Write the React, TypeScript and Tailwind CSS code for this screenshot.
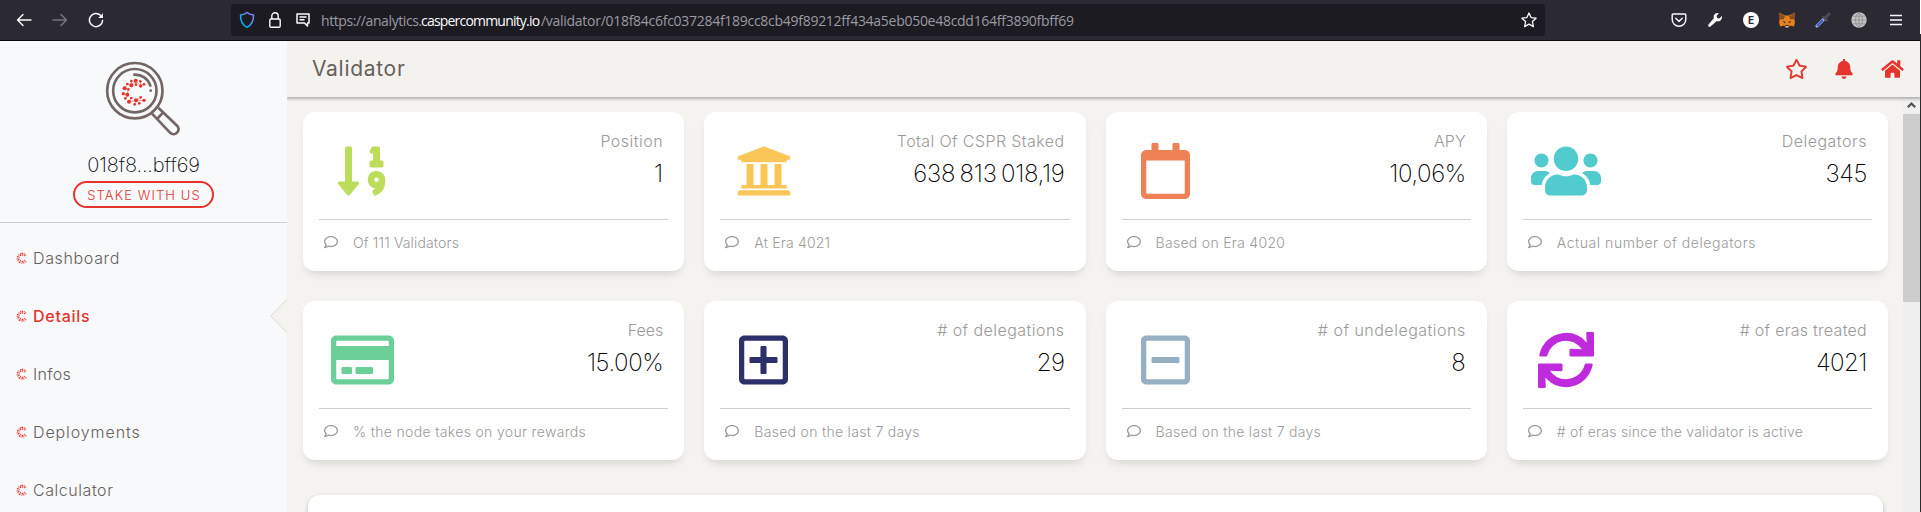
import type { ReactNode } from "react";
import type { IconType } from "react-icons";
import {
  FaBell,
  FaHome,
  FaRegCalendar,
  FaRegComment,
  FaRegCreditCard,
  FaRegMinusSquare,
  FaRegPlusSquare,
  FaRegStar,
  FaSortNumericDown,
  FaSync,
  FaUniversity,
  FaUsers,
} from "react-icons/fa";

const RING_DOTS: [number, number, number][] = [
  [382, 252, 4], [394, 243, 4], [407, 242, 6], [421, 244, 4], [432, 253, 4], [422, 258, 5],
  [408, 254, 4], [394, 256, 6], [374, 265, 6], [385, 268, 4], [370, 281, 5], [382, 284, 6],
  [376, 295, 4], [387, 305, 6], [394, 294, 4], [408, 301, 6], [404, 313, 4], [418, 310, 4],
  [422, 292, 4], [432, 301, 5],
];

function CasperDots() {
  return (
    <g fill="#e5342b" stroke="none">
      {RING_DOTS.map(([x, y, r]) => (
        <circle key={`${x}-${y}`} cx={x} cy={y} r={r} />
      ))}
      <path
        d="M382 252l12 4 14-14v12M394 243v13M421 244l1 14 10-5M407 242l15 16M374 265l11 3M374 265l8-13M370 281l12 3 3-16M376 295l6-11M387 305l7-11M387 305l21-4 14-9M404 313l4-12 24 0M418 310l-10-9"
        fill="none"
        stroke="#e5342b"
        strokeWidth="1.500"
      />
    </g>
  );
}

function Logo() {
  return (
    <svg viewBox="300 168 261 252" className="h-[84px] w-[87px]" fill="none" stroke="#736764" strokeWidth="8">
      <circle cx="404.500" cy="272" r="83" />
      <circle cx="404.500" cy="272" r="65" />
      <path d="M403 224a48 48 0 0 1 48 33" strokeLinecap="round" />
      <circle cx="452" cy="272" r="4" fill="#736764" stroke="none" />
      <path d="M456 341l54 57a14 14 0 0 0 22-1a15 15 0 0 0 0-19l-57-55" strokeLinejoin="round" />
      <path d="M471 357l18-19" />
      <CasperDots />
    </svg>
  );
}

function MenuMark() {
  return (
    <svg viewBox="362 232 78 86" className="h-3 w-[11px] shrink-0">
      <CasperDots />
    </svg>
  );
}

function BrowserBar() {
  return (
    <div className="flex h-[41px] shrink-0 items-center border-b border-[#0c0c0f] bg-[#2b2a33] text-[#fbfbfe]">
      <div className="flex w-[231px] items-center pl-4">
        <svg viewBox="0 0 16 16" className="size-4" fill="none" stroke="currentColor" strokeWidth="1.400" strokeLinecap="round" strokeLinejoin="round">
          <path d="M15 8H1.500M7 2.500L1.500 8L7 13.500" />
        </svg>
        <svg viewBox="0 0 16 16" className="ml-5 size-4 text-[#77767c]" fill="none" stroke="currentColor" strokeWidth="1.400" strokeLinecap="round" strokeLinejoin="round">
          <path d="M1 8h13.500M9 2.500L14.500 8L9 13.500" />
        </svg>
        <svg viewBox="0 0 16 16" className="ml-5 size-4" fill="none" stroke="currentColor" strokeWidth="1.500" strokeLinecap="round">
          <path d="M12.500 3.200A6.600 6.600 0 1 0 14.600 8.500" />
          <path d="M15 1.200V6H10.200z" fill="currentColor" stroke="none" />
        </svg>
      </div>
      <div className="flex h-8 w-[1314px] items-center rounded bg-[#1c1b22] px-2">
        <svg viewBox="0 0 16 18" className="h-[18px] w-4" fill="none" strokeWidth="1.500" strokeLinejoin="round">
          <defs>
            <linearGradient id="shield" x1="0" y1="1" x2="1" y2="0">
              <stop offset="0.300" stopColor="#00b3f4" />
              <stop offset="1" stopColor="#ab71ff" />
            </linearGradient>
          </defs>
          <path stroke="url(#shield)" d="M8 1.500C6.500 3 4 3.800 1.500 4C1.300 9.500 3 13.700 8 16.300C13 13.700 14.700 9.500 14.500 4C12 3.800 9.500 3 8 1.500z" />
        </svg>
        <svg viewBox="0 0 12 16" className="ml-[14px] h-4 w-3" fill="none" stroke="currentColor" strokeWidth="1.400">
          <rect x=".8" y="7" width="10.400" height="8.200" rx="1.200" />
          <path d="M2.800 7V4a3.200 3.200 0 0 1 6.400 0v3" />
        </svg>
        <svg viewBox="0 0 14 14" className="ml-[15px] size-3.5" fill="none" stroke="currentColor" strokeWidth="1.500" strokeLinejoin="round">
          <path d="M1 1h12v9h-1.500v3l-3-3H1zM3.500 4h7M3.500 6.800h5" />
        </svg>
        <div className="ml-[11px] flex pt-0.5 font-['Open_Sans',sans-serif] text-[14px] leading-5 text-[#9b9aa1]">
          <span className="w-[100px] tracking-[-0.4px]">https://analytics.</span>
          <span className="w-[120px] tracking-[-0.8px] text-[#fbfbfe]">caspercommunity.io</span>
          <span className="tracking-[-0.28px]">
            /validator/018f84c6fc037284f189cc8cb49f89212ff434a5eb050e48cdd164ff3890fbff69
          </span>
        </div>
        <svg viewBox="0 0 16 16" className="ml-auto size-4" fill="none" stroke="currentColor" strokeWidth="1.300" strokeLinejoin="round">
          <path d="M8 1l2.100 4.600 5 .6-3.700 3.400 1 5L8 12.100 3.600 14.600l1-5L.9 6.200l5-.6z" />
        </svg>
      </div>
      <div className="ml-auto flex items-center gap-5 pr-[17px]">
        <svg viewBox="0 0 16 16" className="size-4" fill="none" stroke="currentColor" strokeWidth="1.400" strokeLinecap="round" strokeLinejoin="round">
          <path d="M2.200 2h11.600a1 1 0 0 1 1 1v4.500a6.800 6.800 0 0 1-13.600 0V3a1 1 0 0 1 1-1zM4.800 6.300L8 9.400l3.200-3.100" />
        </svg>
        <svg viewBox="0 0 16 16" className="size-4" fill="currentColor">
          <path d="M14.900 4.100l-2.500 2.300-2.300-.5-.5-2.200L12 1.200a4 4 0 0 0-5.200 5L1.300 12.800a1.400 1.400 0 0 0 1.900 1.900l6.500-5.600a4 4 0 0 0 5.200-5z" />
        </svg>
        <div className="flex size-4 items-center justify-center rounded-full bg-white font-['Inter',sans-serif] text-[10px] font-bold text-[#2b2a33]">
          E
        </div>
        <svg viewBox="0 0 16 16" className="size-4">
          <path d="M0 .6L6 3.500h4L16 .6 15.300 7l.6 3.500-1 4-4-1-1.400 1.700h-3L5.100 13.500l-4 1-1-4L.7 7z" fill="#e8821e" />
          <path d="M0 .6L6 4.500 4.500 7.500.7 7zM16 .6L10 4.500l1.500 3 3.800-.5z" fill="#8a4a22" />
          <path d="M3.500 9l3 .8-.5 1.600zM12.500 9l-3 .8.5 1.600zM6.500 13h3l.4 1.200H6.100z" fill="#3c2a23" />
          <path d="M6.300 14.200h3.400l-.5 1.400H6.800z" fill="#d7c1b3" />
        </svg>
        <svg viewBox="0 0 16 16" className="size-4" strokeLinecap="round">
          <path d="M2 14L9.500 6.500" stroke="#c9d3ee" strokeWidth="3" />
          <path d="M2.400 13.600L7.500 8.500" stroke="#2f55d4" strokeWidth="2" />
          <path d="M8.500 5l3 3M10.500 6l3.500-4" stroke="#4b4b52" strokeWidth="3" />
        </svg>
        <svg viewBox="0 0 16 16" className="size-4">
          <circle cx="8" cy="8" r="7.700" fill="#c4c4c4" />
          <path d="M.5 8h15M8 .5v15M2 4.200h12M2 11.800h12M8 .5C3.300 4 3.300 12 8 15.500C12.700 12 12.700 4 8 .5" fill="none" stroke="#85858a" strokeWidth=".7" />
        </svg>
        <svg viewBox="0 0 14 12" className="ml-[2px] h-3 w-3.5" stroke="currentColor" strokeWidth="1.300">
          <path d="M1 1.500h12M1 6h12M1 10.500h12" />
        </svg>
      </div>
    </div>
  );
}

function MenuItem({ children }: { children: ReactNode }) {
  return (
    <div className="flex h-[58px] items-center gap-1.5 pl-4 text-base font-light text-[#66615b]">
      <MenuMark />
      {children}
    </div>
  );
}

function Sidebar() {
  return (
    <aside className="flex w-[287px] shrink-0 flex-col bg-[#f8f9fb]">
      <div className="flex h-[182px] shrink-0 flex-col items-center border-b border-[#cfcfcf] pt-[15px]">
        <Logo />
        <div className="mt-[9px] text-[20px] leading-8 font-extralight tracking-[-0.1px] text-black">018f8...bff69</div>
        <div className="flex h-[27px] w-[141px] items-center justify-center rounded-full border-2 border-[#e5342b] pt-0.5 pl-px text-[13px] font-light tracking-[1.1px] text-[#e5342b]">
          STAKE WITH US
        </div>
      </div>
      <nav className="pt-[6px]">
        <MenuItem><span className="tracking-[0.65px]">Dashboard</span></MenuItem>
        <div className="flex items-center justify-between">
          <MenuItem><span className="font-medium tracking-[0.75px] text-[#e5342b]">Details</span></MenuItem>
          <svg viewBox="0 0 17 34" className="h-[34px] w-[17px]">
            <path d="M17 0L0.500 17L17 34z" fill="#f4f3ef" />
            <path d="M17 0.500L0.700 17L17 33.500" fill="none" stroke="#dddad3" />
          </svg>
        </div>
        <MenuItem><span className="tracking-[0.3px]">Infos</span></MenuItem>
        <MenuItem><span className="tracking-[0.9px]">Deployments</span></MenuItem>
        <MenuItem><span className="tracking-[0.55px]">Calculator</span></MenuItem>
      </nav>
    </aside>
  );
}

type Stat = {
  icon: IconType;
  iconClass: string;
  label: string;
  labelClass: string;
  value: string;
  valueClass: string;
  note: string;
  noteClass: string;
};

const STATS: Stat[] = [
  { icon: FaSortNumericDown, iconClass: "h-14 w-[49px] text-[#bbdd5a]", label: "Position", labelClass: "tracking-[0.5px]", value: "1", valueClass: "", note: "Of 111 Validators", noteClass: "tracking-[0.15px]" },
  { icon: FaUniversity, iconClass: "h-14 w-14 text-[#fbc658]", label: "Total Of CSPR Staked", labelClass: "tracking-[0.4px]", value: "638 813 018,19", valueClass: "tracking-[-0.3px] [word-spacing:-2px]", note: "At Era 4021", noteClass: "tracking-[0.2px]" },
  { icon: FaRegCalendar, iconClass: "h-14 w-[49px] text-[#ef8157]", label: "APY", labelClass: "tracking-[0.1px]", value: "10,06%", valueClass: "tracking-[-0.4px]", note: "Based on Era 4020", noteClass: "tracking-[0.3px]" },
  { icon: FaUsers, iconClass: "h-14 w-[70px] text-[#51cbce]", label: "Delegators", labelClass: "tracking-[0.5px]", value: "345", valueClass: "tracking-[-0.4px]", note: "Actual number of delegators", noteClass: "tracking-[0.55px]" },
  { icon: FaRegCreditCard, iconClass: "h-14 w-[63px] text-[#6bd098]", label: "Fees", labelClass: "", value: "15.00%", valueClass: "tracking-[-0.4px]", note: "% the node takes on your rewards", noteClass: "tracking-[0.33px]" },
  { icon: FaRegPlusSquare, iconClass: "h-14 w-[49px] text-[#2e3069]", label: "# of delegations", labelClass: "tracking-[0.45px]", value: "29", valueClass: "tracking-[-0.5px]", note: "Based on the last 7 days", noteClass: "tracking-[0.3px]" },
  { icon: FaRegMinusSquare, iconClass: "h-14 w-[49px] text-[#97afc3]", label: "# of undelegations", labelClass: "tracking-[0.5px]", value: "8", valueClass: "", note: "Based on the last 7 days", noteClass: "tracking-[0.3px]" },
  { icon: FaSync, iconClass: "h-14 w-14 text-[#bf2bdc]", label: "# of eras treated", labelClass: "tracking-[0.27px]", value: "4021", valueClass: "tracking-[-0.5px]", note: "# of eras since the validator is active", noteClass: "tracking-[0.23px]" },
];

function StatCard({ stat }: { stat: Stat }) {
  const Icon = stat.icon;
  return (
    <section className="flex h-[159px] flex-col rounded-xl bg-white px-4 shadow-[0_6px_10px_-4px_rgba(0,0,0,0.15)]">
      <div className="flex h-[107px] justify-between">
        <div className="flex w-[87px] justify-center pt-[31px]">
          <Icon className={`${stat.iconClass} shrink-0`} />
        </div>
        <div className="pt-[17px] pr-[5px] text-right">
          <div className={`text-base leading-6 font-light text-[#9a9a9a] ${stat.labelClass}`}>{stat.label}</div>
          <div className={`mt-[3px] text-2xl leading-9 font-extralight text-black ${stat.valueClass}`}>{stat.value}</div>
        </div>
      </div>
      <div className="flex items-center gap-[15px] border-t border-[#cfcfcf] pt-[13px] pl-[5px] text-sm font-light text-[#9a9a9a]">
        <FaRegComment className="-mt-0.5 size-3.5" />
        <span className={stat.noteClass}>{stat.note}</span>
      </div>
    </section>
  );
}

export default function App() {
  return (
    <div className="flex h-[512px] w-[1921px] overflow-hidden bg-white font-['Inter',sans-serif]">
      <div className="flex min-w-0 flex-1 flex-col">
        <BrowserBar />
        <div className="flex min-h-0 flex-1">
          <Sidebar />
          <div className="flex min-w-0 flex-1 flex-col bg-[#f4f3ef]">
            <header className="z-10 flex h-14 shrink-0 items-center justify-between bg-[#f4f2ee] pr-4 pl-[25px] shadow-[0_1px_3px_1px_rgba(0,0,0,0.28)] [clip-path:inset(0_0_-8px_0)]">
              <h1 className="text-[21px] tracking-[0.7px] text-[#66615b]">Validator</h1>
              <div className="flex items-center text-[#e5342b]">
                <FaRegStar className="h-5 w-[23px]" />
                <FaBell className="ml-[27px] h-5 w-[18px]" />
                <FaHome className="ml-7 h-5 w-[23px]" />
              </div>
            </header>
            <div className="flex min-h-0 flex-1">
              <main className="min-w-0 flex-1 overflow-hidden pt-[15px] pr-[15px] pl-4">
                <div className="grid grid-cols-4 gap-x-5 gap-y-[30px]">
                  {STATS.map((stat) => (
                    <StatCard key={stat.label} stat={stat} />
                  ))}
                </div>
                <div className="mx-[5px] mt-[35px] h-40 rounded-xl bg-white shadow-[0_2px_4px_rgba(0,0,0,0.25)]" />
              </main>
              <div className="flex w-[17px] flex-col bg-[#f0f0f0]">
                <svg viewBox="0 0 17 17" className="h-[17px] w-[17px]" fill="none" stroke="#505050" strokeWidth="2.200">
                  <path d="M4.800 10.200L8.500 6.500L12.200 10.200" />
                </svg>
                <div className="h-[188px] bg-[#cdcdcd]" />
              </div>
            </div>
          </div>
        </div>
      </div>
      <div className="flex w-px flex-col bg-[#2b2b2b]">
        <div className="h-[34px] bg-white" />
      </div>
    </div>
  );
}
